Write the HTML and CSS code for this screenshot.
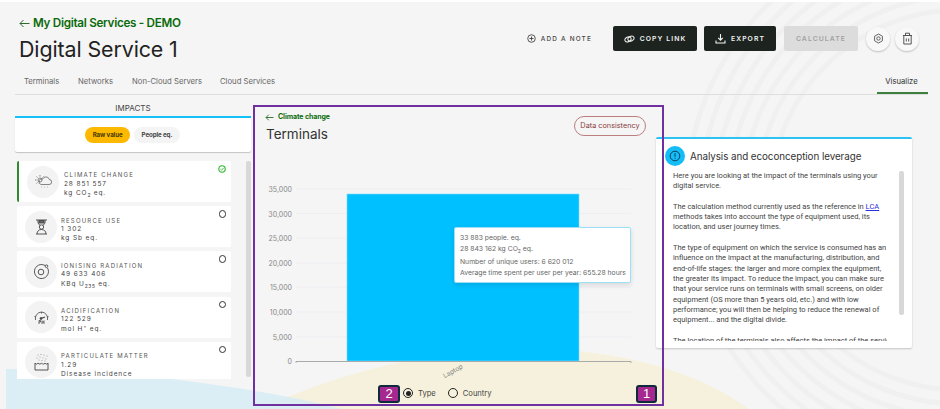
FILE: index.html
```html
<!DOCTYPE html>
<html lang="en-US">
<head>
  <meta charset="utf-8">
  <title>Digital Service 1</title>
  <link rel="stylesheet" href="styles.css">
</head>
<body>
<div class="page">
  <svg class="backdrop" width="940" height="409" viewBox="0 0 940 409" aria-hidden="true">
    <g class="rings">
      <circle cx="960" cy="200" r="190"/><circle cx="960" cy="200" r="204"/><circle cx="960" cy="200" r="218"/>
      <circle cx="960" cy="200" r="232"/><circle cx="960" cy="200" r="246"/><circle cx="960" cy="200" r="260"/>
      <circle cx="960" cy="200" r="274"/>
    </g>
    <path class="cream" d="M262 409 C330 375 430 349 530 349 C620 349 700 372 748 409 Z"/>
    <path class="sky" d="M6 409 V369 C110 369 250 385 342 409 Z"/>
  </svg>

  <header class="top">
    <div class="heading">
      <a class="back">
        <svg width="11" height="9" viewBox="0 0 11 9"><path d="M10.5 4.5H1M4.5 1 1 4.5 4.5 8" fill="none" stroke="#2c6b2c" stroke-width="1"/></svg>
        My Digital Services - DEMO
      </a>
      <h1>Digital Service 1</h1>
    </div>
    <div class="actions">
      <span class="note">
        <svg width="9" height="9" viewBox="0 0 10 10"><circle cx="5" cy="5" r="4.2" fill="none" stroke="#333" stroke-width=".9"/><path d="M5 2.7v4.6M2.7 5h4.6" stroke="#333" stroke-width=".9"/></svg>
        ADD A NOTE
      </span>
      <button class="btn copy">
        <svg width="11" height="8" viewBox="0 0 11 8"><g fill="none" stroke="#f2f2f2" stroke-width="1"><ellipse cx="4" cy="4.4" rx="3.2" ry="2.4" transform="rotate(-25 4 4.4)"/><ellipse cx="7" cy="3.6" rx="3.2" ry="2.4" transform="rotate(-25 7 3.6)"/></g></svg>
        COPY LINK
      </button>
      <button class="btn export">
        <svg width="11" height="11" viewBox="0 0 11 11"><path d="M5.5 1v6M3.2 4.8 5.5 7.2 7.8 4.8M1 7.6V10h9V7.6" fill="none" stroke="#f2f2f2" stroke-width="1.1"/></svg>
        EXPORT
      </button>
      <button class="btn calc">CALCULATE</button>
      <span class="round">
        <svg width="11" height="11" viewBox="0 0 11 11"><path d="M5.5 1 9.4 3.2v4.6L5.5 10 1.6 7.8V3.2Z" fill="none" stroke="#555" stroke-width=".9"/><circle cx="5.5" cy="5.5" r="1.7" fill="none" stroke="#555" stroke-width=".9"/></svg>
      </span>
      <span class="round">
        <svg width="11" height="13" viewBox="0 0 11 13"><path d="M1 3.5h9M3.5 3.5V1.2h4v2.3M1.8 3.5V12h7.4V3.5M4.3 6.5v3M6.7 6.5v3" fill="none" stroke="#444" stroke-width=".9"/></svg>
      </span>
    </div>
  </header>

  <nav class="tabs">
    <a>Terminals</a>
    <a>Networks</a>
    <a>Non-Cloud Servers</a>
    <a>Cloud Services</a>
    <a class="tab-on">Visualize</a>
  </nav>

  <main class="board">
    <section class="impacts">
      <h2>IMPACTS</h2>
      <div class="switch">
        <span class="pill pill-on">Raw value</span>
        <span class="pill">People eq.</span>
      </div>
      <div class="list-wrap">
        <div class="list">
          <div class="card card-on">
            <span class="disc">
              <svg width="17" height="14" viewBox="0 0 17 14"><g fill="none" stroke="#555" stroke-width=".7"><circle cx="5" cy="5" r="2"/><path d="M5 0v1.5M0 5h1.5M1.5 1.5l1 1M8.5 1.5l-1 1M1.5 8.5l1-1M6 9.5h8a2.5 2.5 0 0 0 .3-5 3.5 3.5 0 0 0-6.6-.5A2.7 2.7 0 0 0 6 9.5ZM6 12h.5M9 12h.5M12 12h.5"/></g></svg>
            </span>
            <div class="info">
              <h3>CLIMATE CHANGE</h3>
              <p>28 851 557</p>
              <p>kg CO<sub>2</sub> eq.</p>
            </div>
            <svg class="mark" width="8" height="8" viewBox="0 0 8 8"><circle cx="4" cy="4" r="3.2" fill="none" stroke="#2bb52b" stroke-width="1.1"/><path d="M2.4 4.1 3.6 5.2 5.6 2.9" fill="none" stroke="#2bb52b" stroke-width=".9"/></svg>
          </div>
          <div class="card">
            <span class="disc">
              <svg width="13" height="16" viewBox="0 0 13 16"><g fill="none" stroke="#444" stroke-width=".9"><path d="M1 1h11M3 1v3l2 2.5M10 1v3L8 6.500M1 15h11M2 15c0-3 2-4.500 4.500-4.500S11 12 11 15"/><circle cx="6.500" cy="8" r="2.200"/><path d="M4 1.500h5v2.500H4Z" fill="#666"/></g></svg>
            </span>
            <div class="info">
              <h3>RESOURCE USE</h3>
              <p>1 302</p>
              <p>kg Sb eq.</p>
            </div>
            <span class="mark ring"></span>
          </div>
          <div class="card">
            <span class="disc">
              <svg width="17" height="17" viewBox="0 0 17 17"><g fill="none" stroke="#444" stroke-width=".9"><path d="M12 2.500A7 7 0 1 0 14.500 5"/><circle cx="8" cy="9" r="2.800"/><circle cx="13.500" cy="3.200" r="1.300"/></g></svg>
            </span>
            <div class="info">
              <h3>IONISING RADIATION</h3>
              <p>49 633 406</p>
              <p>KBq U<sub>235</sub> eq.</p>
            </div>
            <span class="mark ring"></span>
          </div>
          <div class="card">
            <span class="disc">
              <svg width="17" height="15" viewBox="0 0 17 15"><g fill="none" stroke="#444" stroke-width=".8"><path d="M2.500 10A6.500 6.500 0 0 1 8.500 2a6.500 6.500 0 0 1 6 8M1.500 6.500l1.500.8M15.500 6.500l-1.500.8M8.500 2v1.500"/><path d="M8 8.500 12 7" stroke-width="1.200"/><circle cx="8" cy="8.500" r="1" fill="#444"/><path d="M6 14v-3.500h1.500v1.500H6M9 14v-3.500M11 14v-3.500M9 12h2"/></g></svg>
            </span>
            <div class="info">
              <h3>ACIDIFICATION</h3>
              <p>122 529</p>
              <p>mol H<sup>+</sup> eq.</p>
            </div>
            <span class="mark ring"></span>
          </div>
          <div class="card">
            <span class="disc">
              <svg width="15" height="18" viewBox="0 0 15 18"><g fill="none" stroke="#444" stroke-width=".9"><path d="M1 10v7h13v-7c-1 1.500-2 1.500-3 0-1 1.500-2 1.500-3.500 0-1 1.500-2 1.500-3.500 0-1 1.500-2 1.500-3 0Z"/></g><g fill="#999"><circle cx="4" cy="2" r=".6"/><circle cx="7" cy="1.500" r=".6"/><circle cx="10" cy="2" r=".6"/><circle cx="13" cy="3" r=".6"/><circle cx="3" cy="5" r=".6"/><circle cx="6" cy="4" r=".6"/><circle cx="9" cy="5" r=".6"/><circle cx="12" cy="6" r=".6"/><circle cx="5" cy="7" r=".6"/><circle cx="8" cy="7.500" r=".6"/><circle cx="11" cy="8" r=".6"/></g></svg>
            </span>
            <div class="info">
              <h3>PARTICULATE MATTER</h3>
              <p>1.29</p>
              <p>Disease incidence</p>
            </div>
            <span class="mark ring"></span>
          </div>
        </div>
        <div class="thumb"></div>
      </div>
    </section>

    <section class="detail">
      <a class="back small">
        <svg width="9" height="7" viewBox="0 0 9 7"><path d="M8.500 3.500H1M3.800 .7 1 3.500l2.800 2.800" fill="none" stroke="#2c6b2c" stroke-width=".9"/></svg>
        Climate change
      </a>
      <div class="detail-head">
        <h2>Terminals</h2>
        <span class="consistency">Data consistency</span>
      </div>
      <div class="chart">
        <svg width="403" height="196" viewBox="0 0 403 196">
          <g class="grid">
            <path d="M43 5H378M43 29.500H378M43 54H378M43 79H378M43 103H378M43 128H378M43 153H378"/>
          </g>
          <g class="ticks">
            <text x="39" y="8">35,000</text>
            <text x="39" y="32.500">30,000</text>
            <text x="39" y="57">25,000</text>
            <text x="39" y="82">20,000</text>
            <text x="39" y="106">15,000</text>
            <text x="39" y="131">10,000</text>
            <text x="39" y="156">5,000</text>
            <text x="39" y="180">0</text>
          </g>
          <rect class="bar" x="94" y="10" width="232" height="167"/>
          <path class="axis" d="M43 179V177.500H378V179"/>
          <text class="cat" transform="translate(201 189) rotate(-30)" text-anchor="middle">Laptop</text>
        </svg>
        <div class="tip">
          <p>33 883 people. eq.</p>
          <p>28 843 162 kg CO<sub>2</sub> eq.</p>
          <p class="tip-gap">Number of unique users: 6 620 012</p>
          <p>Average time spent per user per year: 655.28 hours</p>
        </div>
      </div>
      <div class="radios">
        <span class="radio radio-on"></span><span class="radio-label">Type</span>
        <span class="radio"></span><span class="radio-label">Country</span>
      </div>
    </section>

    <aside class="advice">
      <div class="advice-head">
        <span class="info-dot">
          <svg width="12" height="12" viewBox="0 0 12 12"><circle cx="6" cy="6" r="4.800" fill="none" stroke="#10405a" stroke-width="1"/><path d="M6 3.200v3.600M6 7.800v1" stroke="#10405a" stroke-width="1"/></svg>
        </span>
        <h2>Analysis and ecoconception leverage</h2>
      </div>
      <div class="advice-body">
        <div class="advice-text">
          <p>Here you are looking at the impact of the terminals using your<br>digital service.</p>
          <p>The calculation method currently used as the reference in <a class="lca">LCA</a><br>methods takes into account the type of equipment used, its<br>location, and user journey times.</p>
          <p>The type of equipment on which the service is consumed has an<br>influence on the impact at the manufacturing, distribution, and<br>end-of-life stages: the larger and more complex the equipment,<br>the greater its impact. To reduce the impact, you can make sure<br>that your service runs on terminals with small screens, on older<br>equipment (OS more than 5 years old, etc.) and with low<br>performance; you will then be helping to reduce the renewal of<br>equipment... and the digital divide.</p>
          <p>The location of the terminals also affects the impact of the service</p>
        </div>
        <div class="thumb thumb-text"></div>
      </div>
    </aside>
  </main>

  <!-- review annotation laid over the page -->
  <div class="callout">
    <span class="tag tag-two">2</span>
    <span class="tag tag-one">1</span>
  </div>
</div>
</body>
</html>
```

FILE: styles.css
```css
* {box-sizing: border-box;}
html, body {margin: 0; padding: 0;}
body {font-family: "Inter", "Liberation Sans", sans-serif; color: #333;}
h1, h2, h3, p {margin: 0; font-weight: normal;}
button {font-family: inherit;}

.page {position: relative; width: 940px; height: 409px; overflow: hidden; background: #f5f5f5; border-top: 2px solid #fff;}
.backdrop {position: absolute; left: 0; top: -2px;}
.rings circle {fill: none; stroke: #f0f0f0; stroke-width: 5;}
.cream {fill: #f6f1dc;}
.sky {fill: #d4ecf5; opacity: .8;}

.top {position: relative; display: flex; justify-content: space-between; padding: 14px 21px 0 19px; height: 73px;}
.back {display: flex; align-items: center; gap: 3px; color: #0b6b0b; font-size: 11.700px; font-weight: 600; letter-spacing: -.3px; line-height: 15px;}
.top h1 {font-size: 21.400px; line-height: 30px; margin-top: 3px; color: #222; letter-spacing: -.1px;}
.actions {display: flex; align-items: center; margin-top: 10px; height: 25px;}
.note {display: flex; align-items: center; gap: 5px; font-size: 6.400px; letter-spacing: 1.200px; font-weight: 500; color: #444; margin-right: 21px;}
.btn {display: flex; align-items: center; justify-content: center; gap: 5px; height: 25px; border: 0; border-radius: 2px; font-size: 6.800px; letter-spacing: 1.100px; font-weight: 600; padding: 0;}
.copy {width: 84px; background: #1d2420; color: #f2f2f2; margin-right: 7px;}
.export {width: 72px; background: #1d2420; color: #f2f2f2; margin-right: 8px;}
.calc {width: 74px; background: #dcdcdc; color: #a2a2a2; margin-right: 8px;}
.round {display: flex; align-items: center; justify-content: center; width: 24px; height: 24px; border-radius: 50%; background: #f8f8f8; box-shadow: 0 1px 2px rgba(0,0,0,.22); margin-right: 5px;}
.round:last-child {margin-right: 0;}

.tabs {position: relative; display: flex; height: 20px; margin: 0 12px 0 15px; border-bottom: 1px solid #dedede; font-size: 7.700px; color: #666; line-height: 13px;}
.tabs a {margin-left: 9px; margin-right: 9px; width: 36px; white-space: nowrap;}
.tabs a:nth-child(3) {width: 70px;}
.tabs .tab-on {margin-left: auto; margin-right: 0; width: 51px; height: 19px; text-align: center; color: #333; border-bottom: 2px solid #3d7f3d; padding-right: 2px;}

.board {position: relative; display: flex; padding-left: 15px;}

.impacts {width: 236px; flex: none;}
.impacts h2 {font-size: 8px; line-height: 26px; text-align: center; color: #444; border-bottom: 2px solid #14c1f5; height: 23px;}
.switch {display: flex; justify-content: center; gap: 4px; background: #fff; height: 34px; padding-top: 9px; padding-right: 1px; border-radius: 0 0 2px 2px; box-shadow: 0 1px 1px rgba(0,0,0,.2);}
.pill {display: block; height: 16px; border-radius: 8px; padding: 0 7.500px; font-size: 6.200px; line-height: 16px; font-weight: 700; color: #444; background: #f4f4f4; letter-spacing: -.1px;}
.pill-on {background: #fdb900; color: #4a3a00;}

.list-wrap {display: flex; height: 218px; margin-top: 9px; padding-left: 2px;}
.list {width: 214px; height: 218px; overflow: hidden;}
.card {position: relative; display: flex; align-items: center; height: 41px; margin-bottom: 4.200px; background: #fff; border-radius: 2px; padding-left: 8px;}
.card-on {border-left: 2px solid #2f8a2f; padding-left: 8px;}
.disc {display: flex; align-items: center; justify-content: center; flex: none; width: 32px; height: 32px; border-radius: 50%; background: #f3f3f3; margin-right: 4px;}
.card-on .disc {margin-right: 5px;}
.info {font-size: 6.500px; letter-spacing: .9px; line-height: 9.400px; color: #444; white-space: nowrap; padding-top: 6px;}
.info h3 {font-size: 6px; letter-spacing: 1.200px; font-weight: 400; color: #555;}
.info sub, .info sup {font-size: 5px; line-height: 0; letter-spacing: .5px;}
.mark {position: absolute; right: 5px; top: 4px;}
.ring {width: 7.500px; height: 7.500px; border-radius: 50%; border: 1.300px solid #333;}
.thumb {width: 5px; height: 216px; margin: 0 0 0 15px; background: #d8d8d8; border-radius: 2px; flex: none;}

.detail {position: relative; width: 403px; flex: none; margin-left: 2px; padding-top: 17px;}
.small {font-size: 7px; line-height: 10px; margin-left: 12px; gap: 4px; letter-spacing: -.1px; height: 10px; font-weight: 700;}
.detail-head {display: flex; justify-content: space-between; height: 20px; margin-left: 13px; margin-right: 10px;}
.detail-head h2 {font-size: 13.500px; line-height: 20px; margin-top: 2px; color: #333;}
.consistency {height: 20px; width: 72px; margin-top: -6px; border: 1px solid #bb7f7f; border-radius: 10px; font-size: 7.300px; line-height: 18px; text-align: center; color: #8a3c3c; white-space: nowrap;}
.chart {position: relative; height: 196px; margin-top: 42px;}
.grid path {stroke: #eeeef3; stroke-width: 1; fill: none;}
.ticks text {font-size: 7px; fill: #888; text-anchor: end;}
.bar {fill: #00c0ff; stroke: #7fdcfa; stroke-width: .6;}
.axis {fill: none; stroke: #aaa; stroke-width: 1;}
.cat {font-size: 6.500px; fill: #888;}
.tip {position: absolute; left: 201px; top: 43px; width: 177px; height: 56px; padding: 5px 5px; background: #fff; border: 1px solid #9be0f7; border-radius: 2px; box-shadow: 0 2px 5px rgba(0,0,0,.12); font-size: 6.800px; line-height: 10.500px; color: #666; white-space: nowrap;}
.tip sub {font-size: 5px; line-height: 0;}
.tip-gap {margin-top: 3px;}
.radios {display: flex; align-items: center; margin-top: 5px; padding-left: 150px; height: 16px;}
.radio {position: relative; width: 10px; height: 10px; border-radius: 50%; border: 1px solid #222; margin-right: 5px;}
.radio-on::after {content: ""; position: absolute; left: 1.500px; top: 1.500px; width: 5px; height: 5px; border-radius: 50%; background: #222;}
.radio-label {font-size: 7.600px; color: #444; margin-right: 12px; white-space: nowrap;}

.advice {width: 256px; height: 211px; flex: none; margin-top: 42px; background: #fff; border-top: 2px solid #2cc3f2; border-radius: 2px; box-shadow: 0 1px 2px rgba(0,0,0,.2); overflow: hidden;}
.advice-head {display: flex; align-items: center; gap: 5px; height: 32px; padding: 2px 0 0 9px;}
.info-dot {display: flex; align-items: center; justify-content: center; width: 20px; height: 20px; border-radius: 50%; background: #14bdf7;}
.advice-head h2 {font-size: 9.800px; color: #333; letter-spacing: -.05px; white-space: nowrap;}
.advice-body {display: flex; height: 177px;}
.advice-text {width: 214px; height: 170px; margin-left: 17px; overflow: hidden; font-family: "Roboto", sans-serif; font-size: 7.500px; line-height: 10.300px; color: #444; flex: none; white-space: nowrap;}
.advice-text p {margin-bottom: 10.300px;}
.lca {color: #2d2de0; text-decoration: underline;}
.thumb-text {height: 144px; margin-left: 12px;}

.callout {position: absolute; left: 253px; top: 103px; width: 411px; height: 301px; border: 2px solid #7030a0;}
.tag {position: absolute; top: 278px; height: 18px; border: 2px solid #0d2b3a; border-radius: 3px; background: #a5278f; color: #fff; font-size: 13px; line-height: 14px; text-align: center; font-family: "Liberation Sans", sans-serif;}
.tag-two {left: 123px; width: 22px;}
.tag-one {left: 381px; width: 21px;}
```
